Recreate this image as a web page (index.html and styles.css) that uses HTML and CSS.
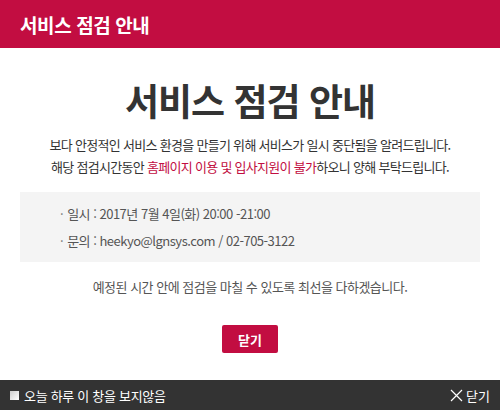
FILE: index.html
```html
<!DOCTYPE html>
<html lang="ko">
<head>
<meta charset="utf-8">
<link rel="stylesheet" href="styles.css">
</head>
<body>
<div class="popup">
  <header class="head">서비스 점검 안내</header>
  <main class="content">
    <h1 class="title">서비스 점검 안내</h1>
    <p class="desc">보다 안정적인 서비스 환경을 만들기 위해 서비스가 일시 중단됨을 알려드립니다.<br>해당 점검시간동안 <span class="em">홈페이지 이용 및 입사지원이 불가</span>하오니 양해 부탁드립니다.</p>
    <ul class="info">
      <li>일시 : 2017년 7월 4일(화) 20:00 -21:00</li>
      <li>문의 : heekyo@lgnsys.com / 02-705-3122</li>
    </ul>
    <p class="note">예정된 시간 안에 점검을 마칠 수 있도록 최선을 다하겠습니다.</p>
    <div class="btn-wrap"><button class="btn">닫기</button></div>
  </main>
  <footer class="foot">
    <label class="today"><span class="chk"></span>오늘 하루 이 창을 보지않음</label>
    <span class="close"><svg width="13" height="13" viewBox="0 0 13 13"><path d="M1 1 L12 12 M12 1 L1 12" stroke="#fff" stroke-width="1.2" fill="none"/></svg>닫기</span>
  </footer>
</div>
</body>
</html>
```
FILE: styles.css
```css
* { box-sizing: border-box; margin: 0; padding: 0; }
html, body { width: 500px; height: 410px; background: #fff; }
body { font-family: "Noto Sans CJK KR", "Noto Sans", sans-serif; color: #333; }
.popup { width: 500px; height: 410px; display: flex; flex-direction: column; }
.head { height: 48px; background: #c20d41; color: #fff; font-size: 19px; font-weight: 700; padding-left: 20px; display: flex; align-items: center; letter-spacing: -0.4px; }
.content { flex: 1; display: flex; flex-direction: column; align-items: center; padding: 25px 20px 0; }
.title { font-size: 37px; font-weight: 700; color: #333; line-height: 54px; letter-spacing: -1px; }
.desc { margin-top: 7px; font-size: 13px; line-height: 22px; color: #333; text-align: center; letter-spacing: -0.7px; }
.em { color: #c20d41; }
.info { list-style: none; width: 460px; margin-top: 14px; background: #f4f4f4; padding: 8px 0 8px 40px; font-size: 13px; line-height: 27px; color: #555; letter-spacing: -0.5px; }
.info li::before { content: "·"; margin-right: 4px; color: #777; }
.note { margin-top: 14px; font-size: 13px; line-height: 22px; color: #555; letter-spacing: -0.5px; }
.btn-wrap { margin-top: 27px; }
.btn { width: 56px; height: 28px; background: #c20d41; color: #fff; border: none; border-radius: 2px; font-family: inherit; font-size: 13px; font-weight: 700; }
.foot { height: 30px; background: #333; color: #fff; display: flex; align-items: center; justify-content: space-between; padding: 0 10px; font-size: 13px; }
.today { display: flex; align-items: center; letter-spacing: -0.3px; }
.chk { width: 9px; height: 9px; background: linear-gradient(135deg, #ccc, #fff); margin-right: 5px; }
.close { display: flex; align-items: center; gap: 3px; }
```
